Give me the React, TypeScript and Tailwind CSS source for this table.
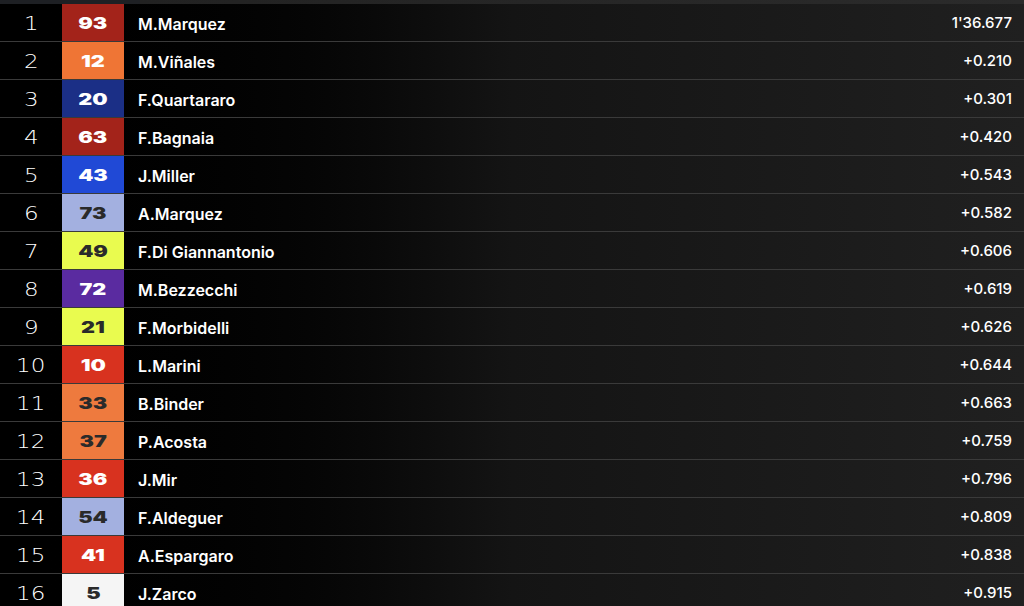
const riders = [
  { pos: 1, num: "93", name: "M.Marquez", time: "1'36.677", bg: "bg-[#a3231a]", fg: "text-white" },
  { pos: 2, num: "12", name: "M.Viñales", time: "+0.210", bg: "bg-[#ef7535]", fg: "text-white" },
  { pos: 3, num: "20", name: "F.Quartararo", time: "+0.301", bg: "bg-[#1b2f86]", fg: "text-white" },
  { pos: 4, num: "63", name: "F.Bagnaia", time: "+0.420", bg: "bg-[#a3231a]", fg: "text-white" },
  { pos: 5, num: "43", name: "J.Miller", time: "+0.543", bg: "bg-[#2049d6]", fg: "text-white" },
  { pos: 6, num: "73", name: "A.Marquez", time: "+0.582", bg: "bg-[#a3b0e0]", fg: "text-[#2a2a2a]" },
  { pos: 7, num: "49", name: "F.Di Giannantonio", time: "+0.606", bg: "bg-[#e9fb4f]", fg: "text-[#2a2a2a]" },
  { pos: 8, num: "72", name: "M.Bezzecchi", time: "+0.619", bg: "bg-[#5a2ba0]", fg: "text-white" },
  { pos: 9, num: "21", name: "F.Morbidelli", time: "+0.626", bg: "bg-[#e9fb4f]", fg: "text-[#2a2a2a]" },
  { pos: 10, num: "10", name: "L.Marini", time: "+0.644", bg: "bg-[#d8321f]", fg: "text-white" },
  { pos: 11, num: "33", name: "B.Binder", time: "+0.663", bg: "bg-[#ee7a3e]", fg: "text-[#2a2a2a]" },
  { pos: 12, num: "37", name: "P.Acosta", time: "+0.759", bg: "bg-[#ee7a3e]", fg: "text-[#2a2a2a]" },
  { pos: 13, num: "36", name: "J.Mir", time: "+0.796", bg: "bg-[#d8321f]", fg: "text-white" },
  { pos: 14, num: "54", name: "F.Aldeguer", time: "+0.809", bg: "bg-[#a3b0e0]", fg: "text-[#2a2a2a]" },
  { pos: 15, num: "41", name: "A.Espargaro", time: "+0.838", bg: "bg-[#d8321f]", fg: "text-white" },
  { pos: 16, num: "5", name: "J.Zarco", time: "+0.915", bg: "bg-[#f5f5f5]", fg: "text-[#2a2a2a]" },
];

export default function App() {
  return (
    <div className="w-[1024px] h-[606px] overflow-hidden bg-gradient-to-r from-black via-[#141414] to-[#202020] font-['Inter',sans-serif]">
      {/* barra superior */}
      <div className="flex h-[4px]">
        <div className="w-[140px] bg-[#1e2024]" />
        <div className="flex-1 bg-gradient-to-r from-[#222] to-[#2b2b2b]" />
      </div>

      {riders.map((r) => (
        <div key={r.pos} className="flex items-stretch h-[38px] border-b border-[#3a3a3a]">
          <div className="w-[62px] flex items-center justify-center pt-[1px] text-white text-[20px] font-extralight font-['DejaVu_Sans',sans-serif]">
            <span className="inline-block scale-x-[1.15]">{r.pos}</span>
          </div>
          <div
            className={`w-[62px] flex items-center justify-center pt-[1px] text-[16px] font-black font-['Inter',sans-serif] ${r.bg} ${r.fg}`}
          >
            <span className="inline-block scale-x-[1.35]">{r.num}</span>
          </div>
          <div className="flex-1 flex items-center pl-[14px] pt-[2px] text-white text-[16px] font-semibold">
            {r.name}
          </div>
          <div className="flex items-center pr-[12px] pt-[2px] text-white text-[15px] font-medium">
            {r.time}
          </div>
        </div>
      ))}
    </div>
  );
}
